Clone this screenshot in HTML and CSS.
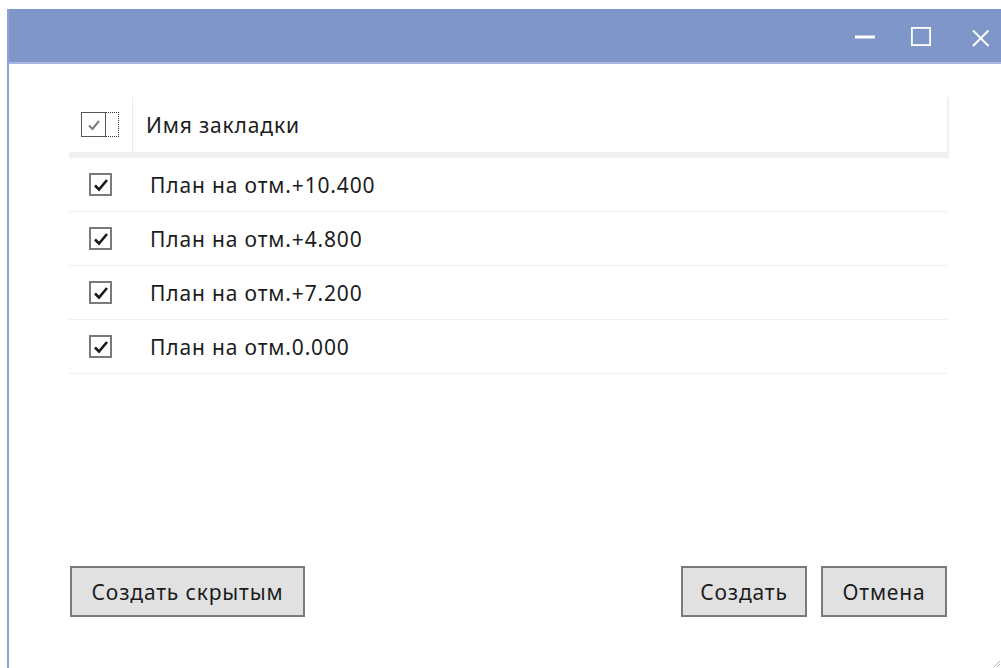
FILE: index.html
```html
<!DOCTYPE html>
<html lang="ru">
<head>
<meta charset="utf-8">
<title>Закладки</title>
<link rel="stylesheet" href="styles.css">
</head>
<body>
<div class="window">
  <div class="titlebar">
    <div class="caption-btn btn-min">
      <svg width="22" height="22" viewBox="0 0 22 22"><rect x="1" y="9.5" width="20" height="3" fill="#fff"/></svg>
    </div>
    <div class="caption-btn btn-max">
      <svg width="22" height="22" viewBox="0 0 22 22"><rect x="1.9" y="1.9" width="18.2" height="17.2" fill="none" stroke="#fff" stroke-width="1.8"/></svg>
    </div>
    <div class="caption-btn btn-close">
      <svg width="22" height="22" viewBox="0 0 22 22"><path d="M3 4.5 L18.5 20 M18.5 4.5 L3 20" stroke="#fff" stroke-width="2"/></svg>
    </div>
  </div>
  <div class="client">
    <div class="grid">
      <div class="grid-header">
        <div class="cell-check">
          <span class="focus-box">
            <span class="check header-check">
              <svg width="16" height="16" viewBox="0 0 16 16"><path d="M3 8.5 L6.5 12 L13 4" fill="none" stroke="#7a7a7a" stroke-width="2"/></svg>
            </span>
          </span>
        </div>
        <div class="cell-name header-name">Имя закладки</div>
      </div>
      <div class="row">
        <div class="cell-check"><span class="check"><svg width="18" height="18" viewBox="0 0 18 18"><path d="M3 9.5 L7 13.5 L15 4" fill="none" stroke="#1a1a1a" stroke-width="2.6"/></svg></span></div>
        <div class="cell-name">План на отм.+10.400</div>
      </div>
      <div class="row">
        <div class="cell-check"><span class="check"><svg width="18" height="18" viewBox="0 0 18 18"><path d="M3 9.5 L7 13.5 L15 4" fill="none" stroke="#1a1a1a" stroke-width="2.6"/></svg></span></div>
        <div class="cell-name">План на отм.+4.800</div>
      </div>
      <div class="row">
        <div class="cell-check"><span class="check"><svg width="18" height="18" viewBox="0 0 18 18"><path d="M3 9.5 L7 13.5 L15 4" fill="none" stroke="#1a1a1a" stroke-width="2.6"/></svg></span></div>
        <div class="cell-name">План на отм.+7.200</div>
      </div>
      <div class="row">
        <div class="cell-check"><span class="check"><svg width="18" height="18" viewBox="0 0 18 18"><path d="M3 9.5 L7 13.5 L15 4" fill="none" stroke="#1a1a1a" stroke-width="2.6"/></svg></span></div>
        <div class="cell-name">План на отм.0.000</div>
      </div>
    </div>
    <div class="buttons">
      <button class="btn btn-wide">Создать скрытым</button>
      <div class="spacer"></div>
      <button class="btn">Создать</button>
      <button class="btn">Отмена</button>
    </div>
    <div class="grip">
      <svg width="12" height="12" viewBox="0 0 12 12"><path d="M11 5 L5 11 M11 8 L8 11" stroke="#b0b0b0" stroke-width="1"/></svg>
    </div>
  </div>
</div>
</body>
</html>
```

FILE: styles.css
```css
html, body {
  margin: 0;
  padding: 0;
  background: #ffffff;
  height: 100%;
  overflow: hidden;
}

body {
  font-family: "Noto Sans", "Open Sans", sans-serif;
  color: #000;
}

.window {
  margin: 9px 0 0 7px;
  height: calc(100% - 9px);
  display: flex;
  flex-direction: column;
  border-left: 2px solid #8fa3d3;
  box-sizing: border-box;
}

/* caption bar with window buttons */
.titlebar {
  height: 53px;
  background: #7f96c8;
  border-bottom: 2px solid #a6b6de;
  display: flex;
  justify-content: flex-end;
  align-items: center;
  flex: none;
}

.caption-btn {
  width: 40px;
  height: 40px;
  display: flex;
  align-items: center;
  justify-content: center;
  margin-top: 2px;
}

.btn-min {
  margin-right: 16px;
}

.btn-max {
  margin-right: 20px;
}

.client {
  flex: 1;
  position: relative;
  padding: 33px 54px 0 60px;
  display: flex;
  flex-direction: column;
}

/* bookmark list */
.grid {
  display: flex;
  flex-direction: column;
}

.grid-header {
  display: flex;
  align-items: center;
  height: 55px;
  border-bottom: 6px solid #f0f0f0;
  box-shadow: 2px 0 0 #f0f0f0;
}

.cell-check {
  width: 81px;
  display: flex;
  align-items: center;
  padding-left: 20px;
  box-sizing: border-box;
  flex: none;
}

.grid-header .cell-check {
  height: 100%;
  border-right: 1px solid #ececec;
  width: 64px;
  padding-left: 12px;
}

.focus-box {
  display: inline-flex;
  width: 38px;
  height: 25px;
  box-sizing: border-box;
  border: 1px dotted #333;
}

.check {
  width: 23px;
  height: 23px;
  border: 2px solid #7a7a7a;
  box-sizing: border-box;
  background: #fff;
  display: flex;
  align-items: center;
  justify-content: center;
}

.header-check {
  margin: -1px;
  width: 25px;
  height: 25px;
  border: 1px solid #555;
}

.cell-name {
  font-size: 21px;
  letter-spacing: 0.85px;
  color: #1c1c1c;
  white-space: nowrap;
}

.header-name {
  padding-left: 13px;
}

.row {
  display: flex;
  align-items: center;
  height: 53px;
  border-bottom: 1px solid #efefef;
}

/* dialog buttons */
.buttons {
  margin-top: auto;
  margin-bottom: 51px;
  display: flex;
  align-items: center;
  gap: 14px;
  padding-left: 1px;
}

.spacer {
  flex: 1;
}

.btn {
  font-family: "Noto Sans", "Open Sans", sans-serif;
  font-size: 21px;
  letter-spacing: 0.85px;
  color: #1c1c1c;
  background: #e1e1e1;
  border: 2px solid #7a7a7a;
  height: 51px;
  width: 126px;
  padding: 0;
  box-sizing: border-box;
}

.btn-wide {
  width: 235px;
}

.grip {
  position: absolute;
  right: 0;
  bottom: 0;
  line-height: 0;
}
```
